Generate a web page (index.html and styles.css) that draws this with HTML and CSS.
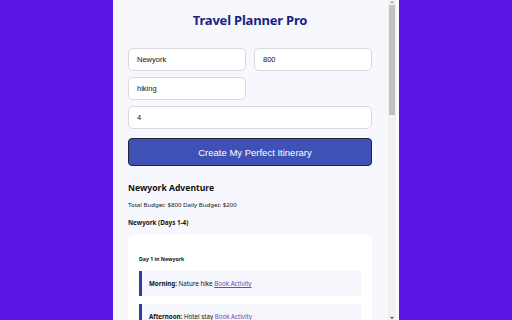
FILE: index.html
```html
<!DOCTYPE html>
<html>
<head>
<meta charset="utf-8">
<link rel="stylesheet" href="styles.css">
</head>
<body>
<div class="popup">
  <div class="content">
    <h1 class="title">Travel Planner Pro</h1>
    <div class="form">
      <div class="row two">
        <div class="field">Newyork</div>
        <div class="field">800</div>
      </div>
      <div class="row two">
        <div class="field">hiking</div>
      </div>
      <div class="row">
        <div class="field">4</div>
      </div>
      <div class="button">Create My Perfect Itinerary</div>
    </div>
    <div class="result">
      <h2 class="trip">Newyork Adventure</h2>
      <p class="budget">Total Budget: $800 Daily Budget: $200</p>
      <h3 class="city">Newyork (Days 1-4)</h3>
      <div class="card">
        <h4 class="day">Day 1 in Newyork</h4>
        <div class="activity"><b>Morning:</b> Nature hike <span class="link">Book Activity</span></div>
        <div class="activity"><b>Afternoon:</b> Hotel stay <span class="link">Book Activity</span></div>
      </div>
    </div>
  </div>
  <div class="scrollbar">
    <div class="arrow up"></div>
    <div class="thumb"></div>
    <div class="track"></div>
    <div class="arrow down"></div>
  </div>
  <div class="edge"></div>
</div>
</body>
</html>
```
FILE: styles.css
```css
html, body {
  margin: 0;
  padding: 0;
  height: 320px;
  overflow: hidden;
}
body {
  background: #5b17e8;
  display: flex;
  justify-content: center;
}
.popup {
  width: 286px;
  height: 320px;
  display: flex;
  background: #f7f8fd;
}
.content {
  flex: 1;
  padding: 0 16px 0 15px;
  overflow: hidden;
  font-family: "Noto Sans", sans-serif;
  color: #111;
}
.title {
  margin: 0;
  padding-top: 11px;
  height: 48px;
  box-sizing: border-box;
  text-align: center;
  font-size: 13px;
  letter-spacing: -0.2px;
  line-height: 19px;
  font-weight: 700;
  color: #1a237e;
}
.form {
  display: flex;
  flex-direction: column;
  gap: 6px;
}
.row {
  display: grid;
  grid-template-columns: 1fr;
}
.row.two {
  grid-template-columns: 1fr 1fr;
  column-gap: 8px;
}
.field {
  height: 23px;
  box-sizing: border-box;
  border: 1px solid #d8d8de;
  border-radius: 5px;
  background: #fff;
  padding-left: 8px;
  display: flex;
  align-items: center;
  font-family: "Liberation Sans", Arial, sans-serif;
  font-size: 7.5px;
  color: #111;
}
.button {
  margin-top: 3px;
  height: 28px;
  box-sizing: border-box;
  border: 1.5px solid #25253a;
  border-radius: 4px;
  background: #3f51b5;
  color: #fff;
  display: flex;
  align-items: center;
  justify-content: center;
  padding-left: 10px;
  font-family: "Liberation Sans", Arial, sans-serif;
  font-size: 9.5px;
}
.result {
  padding-top: 16px;
}
.trip {
  margin: 0;
  font-size: 8.6px;
  line-height: 12px;
  font-weight: 700;
}
.budget {
  margin: 6px 0 0;
  font-size: 6.1px;
  line-height: 10px;
}
.city {
  margin: 8px 0 0;
  font-size: 6.3px;
  line-height: 10px;
  font-weight: 700;
}
.card {
  margin-top: 7px;
  background: #fff;
  border-radius: 6px;
  padding: 19px 11px 10px;
}
.day {
  margin: 0 0 7px;
  font-size: 5.2px;
  line-height: 10px;
  font-weight: 700;
}
.activity {
  height: 25px;
  box-sizing: border-box;
  background: #f5f6fc;
  border-left: 3px solid #2f3fa5;
  padding-left: 7px;
  display: flex;
  align-items: center;
  margin-bottom: 8px;
  font-size: 6.2px;
  white-space: pre;
}
.activity b {
  font-weight: 700;
}
.link {
  color: #6a4bb8;
  text-decoration: underline;
}
.scrollbar {
  width: 8px;
  display: flex;
  flex-direction: column;
  background: #f1f1f1;
}
.arrow {
  height: 5px;
  position: relative;
}
.arrow::after {
  content: "";
  position: absolute;
  left: 2px;
  border-left: 2px solid transparent;
  border-right: 2px solid transparent;
}
.arrow.up::after {
  top: 1px;
  border-bottom: 2px solid #a3a3a3;
}
.arrow.down::after {
  bottom: 1px;
  border-top: 2px solid #505050;
}
.thumb {
  height: 110px;
  margin: 0 1px;
  background: #c1c1c1;
}
.track {
  flex: 1;
}
.edge {
  width: 3px;
  background: #fafafa;
}
```
